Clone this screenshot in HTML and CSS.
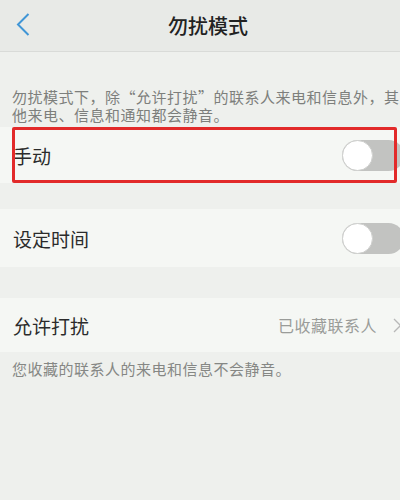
FILE: index.html
```html
<!DOCTYPE html>
<html>
<head>
  <title>勿扰模式</title>
  <link rel="stylesheet" href="styles.css">
</head>
<body>
  <div class="screen">
    <div class="header">
      <span class="back">
        <svg width="14" height="23" viewBox="0 0 14 23"><polyline points="12.5,1 2,11.5 12.5,22" fill="none" stroke="#4096d6" stroke-width="2"/></svg>
      </span>
      <h1>勿扰模式</h1>
    </div>

    <p class="intro">勿扰模式下，除“允许打扰”的联系人来电和信息外，其他来电、信息和通知都会静音。</p>

    <div class="row row-manual">
      <span class="label">手动</span>
      <span class="switch"><span class="knob"></span></span>
      <div class="mark"></div>
    </div>

    <div class="row row-time">
      <span class="label">设定时间</span>
      <span class="switch"><span class="knob"></span></span>
    </div>

    <div class="row row-allow">
      <span class="label">允许打扰</span>
      <span class="value">已收藏联系人</span>
      <svg class="arrow" width="9" height="15" viewBox="0 0 9 15"><polyline points="1,1 7.5,7.5 1,14" fill="none" stroke="#b8b8b8" stroke-width="1.3"/></svg>
    </div>

    <p class="note">您收藏的联系人的来电和信息不会静音。</p>
  </div>
</body>
</html>
```

FILE: styles.css
```css
html, body {
  margin: 0;
  overflow: hidden;
  background: #eef0ed;
}

body {
  font-family: "Noto Sans CJK SC", "Noto Sans", sans-serif;
}

.screen {
  width: 416px;
  height: 500px;
  background: #eef0ed;
}

.header {
  height: 51px;
  background: #e8eae7;
  border-bottom: 1px solid #d9dbd8;
  display: flex;
  align-items: center;
  justify-content: center;
  position: relative;
}

.back {
  position: absolute;
  left: 16px;
  top: 13px;
}

.header h1 {
  margin: 0;
  font-size: 20px;
  font-weight: 500;
  color: #222;
}

.intro {
  margin: 0;
  padding: 36px 12px 0;
  font-size: 15px;
  letter-spacing: 0.5px;
  line-height: 18px;
  color: #7d7f7c;
}

.row {
  display: flex;
  align-items: center;
  padding: 0 12px 0 13px;
  background: #f5f7f4;
  position: relative;
}

.row-manual {
  height: 56px;
  margin-top: 3px;
}

.row-time {
  height: 58px;
  margin-top: 26px;
}

.row-allow {
  height: 54px;
  margin-top: 31px;
  padding-right: 14px;
}

.label {
  flex: 1;
  font-size: 19px;
  color: #2b2b2b;
}

.value {
  font-size: 16px;
  letter-spacing: 0.5px;
  color: #9a9c99;
  margin-right: 16px;
}

.switch {
  width: 62px;
  height: 31px;
  border-radius: 16px;
  background: #c2c3c1;
  display: flex;
  align-items: center;
}

.knob {
  width: 29px;
  height: 29px;
  border-radius: 50%;
  background: #fff;
  border: 1px solid #cfd0ce;
}

/* red annotation frame drawn over the first row */
.mark {
  position: absolute;
  left: 12px;
  top: 0;
  width: 379px;
  height: 50px;
  border: 3px solid #e22a2a;
  border-radius: 2px;
}

.note {
  margin: 8px 0 0;
  padding: 0 12px;
  font-size: 15px;
  letter-spacing: 0.5px;
  line-height: 18px;
  color: #858784;
}
```
